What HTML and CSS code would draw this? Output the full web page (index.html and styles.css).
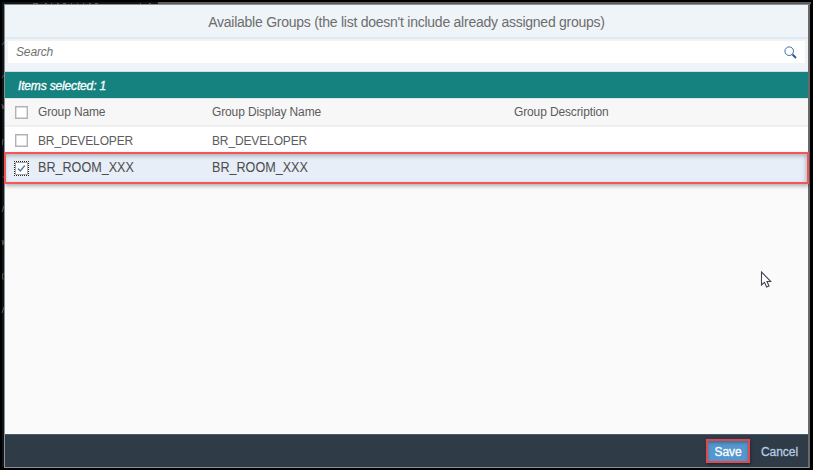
FILE: index.html
```html
<!DOCTYPE html>
<html lang="en">
<head>
<meta charset="utf-8">
<title>Available Groups</title>
<link rel="stylesheet" href="styles.css">
</head>
<body>
<svg class="backdrop" width="813" height="470" viewBox="0 0 813 470" aria-hidden="true">
  <path class="shade" d="M2 2H158V5H5V467H2z"/>
  <path class="page-edge" d="M158 2H811V4H158z"/>
  <path class="marks" d="M33 3.500h5M45 3.500h2M51 3.500h1M57 3.500h2M63 3.500h3M71 3.500h1M77 3.500h1M83 3.500h1M89 3.500h2M95 3.500h3M140 3.500h1M149 3.500h2M2 45l2-3M2 78l2-3M2 104l1 5 1-4M2.500 145v-5h2M2.500 177h2M2 212l2-6M2 240l1 5 1-5M4 274h-1.500v5H4M2 313l2-6"/>
</svg>
<main class="dialog">
  <header class="title">Available Groups (the list doesn't include already assigned groups)</header>
  <div class="search-bar">
    <div class="search-field">
      <span class="placeholder">Search</span>
      <svg class="search-icon" width="13" height="13" viewBox="0 0 13 13"><circle cx="5.200" cy="5.200" r="4.300"/><path d="M8.500 8.500L12 12"/></svg>
    </div>
  </div>
  <div class="selection-info">Items selected: 1</div>
  <section class="table">
    <div class="row head">
      <i class="check"></i>
      <span>Group Name</span><span>Group Display Name</span><span>Group Description</span>
    </div>
    <div class="row">
      <i class="check"></i>
      <span>BR_DEVELOPER</span><span>BR_DEVELOPER</span><span></span>
    </div>
    <div class="row selected">
      <i class="check focused"><svg width="9" height="9" viewBox="0 0 9 9"><path d="M1 4.500L3.300 7L7.800 1.500"/></svg></i>
      <span>BR_ROOM_XXX</span><span>BR_ROOM_XXX</span><span></span>
      <div class="highlight"></div>
    </div>
  </section>
  <footer class="footer">
    <button class="save">Save</button>
    <button class="cancel">Cancel</button>
  </footer>
</main>
<svg class="cursor" width="12" height="18" viewBox="0 0 12 18"><path d="M1.500 1V14L4.500 11.300L6.600 16L9 15L7 10.500H10.800z"/></svg>
</body>
</html>
```
FILE: styles.css
```css
* { box-sizing: border-box; }
body {
  margin: 0;
  width: 813px;
  height: 470px;
  padding: 4px 4px 2px 4px;
  overflow: hidden;
  background: #000;
  font-family: "Liberation Sans", Arial, sans-serif;
  font-size: 12px;
  color: #5c5c5c;
}
.backdrop { position: absolute; left: 0; top: 0; }
.shade { fill: #11161b; }
.page-edge { fill: #5c5c5c; }
.marks { fill: none; stroke: #555; stroke-width: 1; }
.dialog {
  position: relative;
  display: flex;
  flex-direction: column;
  width: 806px;
  height: 464px;
  border: 1px solid #8b9094;
  border-right: 2px solid #696969;
  background: #fafafa;
}
.title {
  height: 34px;
  flex: none;
  border-bottom: 2px solid #dfe9f2;
  background: #eff4f9;
  color: #6d6d6d;
  font-size: 14px;
  letter-spacing: -.25px;
  line-height: 34px;
  text-align: center;
  white-space: nowrap;
}
.search-bar { height: 33px; flex: none; padding: 2px 3px 0; background: #eff4f9; border-bottom: 1px solid #cfdfe5; }
.search-field {
  display: flex;
  align-items: center;
  justify-content: space-between;
  height: 22px;
  padding: 0 8px;
  background: #fff;
}
.placeholder { font-style: italic; color: #707070; letter-spacing: -.15px; }
.search-icon { fill: none; stroke: #3c6da0; stroke-width: 1; margin-top: 1px; }
.search-icon path { stroke: #2c5d95; stroke-width: 2; }
.selection-info {
  height: 26px;
  flex: none;
  padding-left: 13px;
  background: #168280;
  color: #fff;
  font-style: italic;
  letter-spacing: -.16px;
  line-height: 28px;
  -webkit-text-stroke: .3px #fff;
}
.row {
  position: relative;
  display: grid;
  grid-template-columns: 33px 174px 302px 1fr;
  align-items: center;
  height: 26px;
  background: #fff;
  letter-spacing: -.13px;
  white-space: nowrap;
}
.row span { padding-top: 2px; }
.row.head { height: 29px; background: #f7f7f7; border-top: 1px solid #dbe7e7; border-bottom: 2px solid #efefef; }
.row.head span { padding-top: 0; }
.row.selected { height: 31px; background: #e7eef7; font-size: 14px; letter-spacing: 0; color: #4d4d4d; }
.row.selected span { padding-top: 0; margin-top: -3px; transform: scaleX(.9); transform-origin: left center; }
.check { width: 13px; height: 13px; margin-left: 10px; border: 1px solid #b3b3b3; background: #fff; box-shadow: inset 0 0 0 .4px #b3b3b3; }
.check.focused { width: 15px; height: 15px; margin-left: 9px; border: 1px dotted #222; box-shadow: inset 0 0 0 1px #aaa; display: flex; align-items: center; justify-content: center; }
.check svg { fill: none; stroke: #427cac; stroke-width: 1.300; }
.highlight {
  position: absolute;
  left: -1px;
  top: -1px;
  width: 805px;
  height: 32px;
  border: 2px solid #f35658;
  box-shadow: 1px 2px 4px rgba(0,0,0,.3), inset -1px 2px 4px rgba(0,0,0,.25);
}
.footer {
  display: flex;
  align-items: center;
  height: 33px;
  flex: none;
  margin-top: auto;
  padding-left: 701px;
  border-top: 1px solid #495d6e;
  background: #2f3c48;
}
button { border: 0; padding: 0; background: none; font: inherit; white-space: nowrap; }
.save {
  width: 44px;
  height: 24px;
  border: 2px solid #e2494f;
  padding-top: 1px;
  background: #5496cd;
  box-shadow: 1px 2px 3px rgba(0,0,0,.35), inset 0 2px 3px rgba(0,0,0,.25);
  color: #fff;
  letter-spacing: -.1px;
  -webkit-text-stroke: .3px #fff;
}
.cancel { margin-left: 11px; padding-top: 1px; letter-spacing: -.05px; color: #b5cbe0; -webkit-text-stroke: .3px #b5cbe0; }
.cursor { position: absolute; left: 760px; top: 271px; fill: #fff; stroke: #41414a; stroke-width: 1.100; }
```
